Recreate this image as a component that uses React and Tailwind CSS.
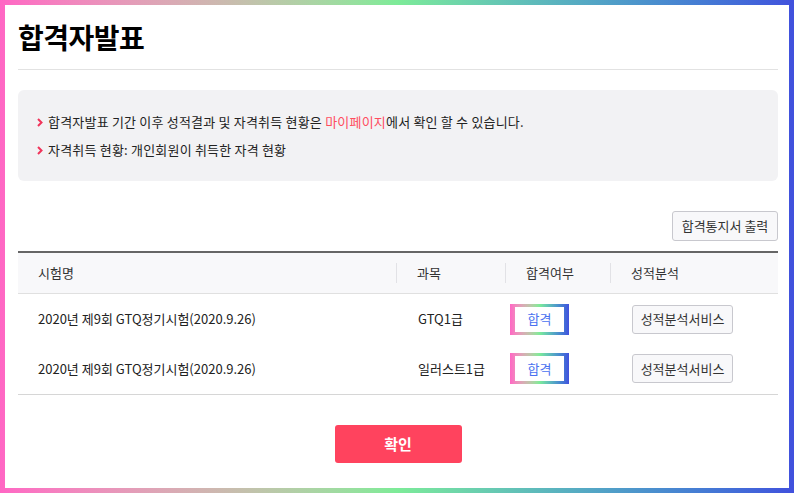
const rows = [
  { name: "2020년 제9회 GTQ정기시험(2020.9.26)", subject: "GTQ1급" },
  { name: "2020년 제9회 GTQ정기시험(2020.9.26)", subject: "일러스트1급" },
]

function Chevron() {
  return (
    <svg width="6" height="9" viewBox="0 0 6 9" className="shrink-0">
      <path d="M1 1l3.5 3.5L1 8" fill="none" stroke="#f0345a" strokeWidth="2" />
    </svg>
  )
}

function PassBadge() {
  return (
    <div className="w-[59px] h-[31px] px-[5px] py-[3px] bg-gradient-to-r from-[#ff66c4] via-[#7deb98] to-[#4150dd]">
      <div className="w-full h-full bg-white flex items-center justify-center text-[13px] text-[#4a72f0]">
        합격
      </div>
    </div>
  )
}

export default function App() {
  return (
    <div
      className="w-[794px] h-[493px] p-[5px] bg-gradient-to-r from-[#ff66c4] via-[#7deb98] to-[#4150dd]"
      style={{ fontFamily: '"Noto Sans CJK KR", "Noto Sans", sans-serif' }}
    >
      <div className="w-full h-full bg-white pl-[13px] pr-[11px] text-[#222]">
        <div className="pt-[14px] pb-[14px] border-b border-[#e2e2e2]">
          <h1 className="text-[28px] leading-[36px] font-bold text-black tracking-[-0.5px]">합격자발표</h1>
        </div>

        <div className="mt-[20px] h-[91px] bg-[#f2f2f4] rounded-[6px] pt-[18px] px-[19px] text-[13px] leading-[28px] tracking-[0.2px]">
          <div className="flex items-center gap-[5px]">
            <Chevron />
            <span>
              합격자발표 기간 이후 성적결과 및 자격취득 현황은 <span className="text-[#ff4d5e]">마이페이지</span>에서 확인 할 수 있습니다.
            </span>
          </div>
          <div className="flex items-center gap-[5px]">
            <Chevron />
            <span>자격취득 현황: 개인회원이 취득한 자격 현황</span>
          </div>
        </div>

        <div className="mt-[30px] flex justify-end">
          <button className="h-[30px] w-[106px] border border-[#c8c8ce] rounded-[3px] bg-[#f8f8fa] text-[13px] text-[#333]">
            합격통지서 출력
          </button>
        </div>

        <div className="mt-[10px] border-t-2 border-[#666] text-[13px]">
          <div className="grid grid-cols-[379px_109px_105px_1fr] h-[41px] items-center bg-[#f8f8fa] border-b border-[#e0e0e0] text-[#333]">
            <div className="pl-[20px] border-r border-[#e2e2e6] h-[20px] flex items-center">시험명</div>
            <div className="pl-[20px] border-r border-[#e2e2e6] h-[20px] flex items-center">과목</div>
            <div className="pl-[20px] border-r border-[#e2e2e6] h-[20px] flex items-center">합격여부</div>
            <div className="pl-[20px] h-[20px] flex items-center">성적분석</div>
          </div>
          <div className="border-b border-[#d6d6d6] pb-[1px]">
            {rows.map((r, i) => (
              <div key={i} className={`grid grid-cols-[379px_109px_105px_1fr] items-center ${i === 0 ? "h-[50px]" : "h-[49px]"}`}>
                <div className="pl-[20px]">{r.name}</div>
                <div className="pl-[21px]">{r.subject}</div>
                <div className="pl-[4px]"><PassBadge /></div>
                <div className="pl-[21px]">
                  <button className="h-[29px] w-[101px] border border-[#c8c8ce] rounded-[3px] bg-[#f8f8fa] text-[13px] text-[#333]">
                    성적분석서비스
                  </button>
                </div>
              </div>
            ))}
          </div>
        </div>

        <div className="mt-[30px] flex justify-center">
          <button className="w-[127px] h-[38px] bg-[#ff435e] rounded-[3px] text-white text-[15px] font-bold">
            확인
          </button>
        </div>
      </div>
    </div>
  )
}
